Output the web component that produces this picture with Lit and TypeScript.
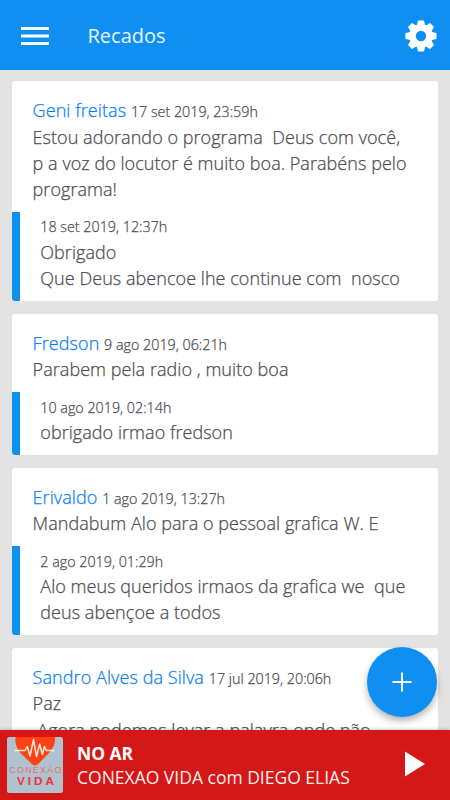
import { LitElement, html, svg, css, nothing } from "lit";
import { customElement, property } from "lit/decorators.js";

interface Reply {
  date: string;
  lines: string[];
}
interface Message {
  author: string;
  date: string;
  lines: string[];
  reply?: Reply;
}

const MESSAGES: Message[] = [
  {
    author: "Geni freitas",
    date: "17 set 2019, 23:59h",
    lines: ["Estou adorando o programa  Deus com você,", "p a voz do locutor é muito boa. Parabéns pelo", "programa!"],
    reply: { date: "18 set 2019, 12:37h", lines: ["Obrigado", "Que Deus abencoe lhe continue com  nosco"] },
  },
  {
    author: "Fredson",
    date: "9 ago 2019, 06:21h",
    lines: ["Parabem pela radio , muito boa"],
    reply: { date: "10 ago 2019, 02:14h", lines: ["obrigado irmao fredson"] },
  },
  {
    author: "Erivaldo",
    date: "1 ago 2019, 13:27h",
    lines: ["Mandabum Alo para o pessoal grafica W. E"],
    reply: { date: "2 ago 2019, 01:29h", lines: ["Alo meus queridos irmaos da grafica we  que", "deus abençoe a todos"] },
  },
  {
    author: "Sandro Alves da Silva",
    date: "17 jul 2019, 20:06h",
    lines: ["Paz", " Agora podemos levar a palavra onde não"],
  },
];

const TEETH = [0, 45, 90, 135, 180, 225, 270, 315];

@customElement("message-card")
export class MessageCard extends LitElement {
  @property({ attribute: false }) message!: Message;

  static styles = css`
    :host {
      display: block;
      background: #fff;
      border-radius: 3px;
      overflow: hidden;
      flex: none;
      color: #4c4d51;
      font-size: 18px;
      font-weight: 300;
      line-height: 26.2px;
      letter-spacing: 0.05px;
      -webkit-text-stroke-width: 0.25px;
    }
    .body {
      padding: 16.4px 0 10px 20.3px;
    }
    .line {
      height: 26.2px;
      white-space: pre;
    }
    .author {
      color: #0a80f5;
      letter-spacing: 0.08px;
    }
    .date {
      font-size: 14.3px;
      letter-spacing: 0;
    }
    .reply {
      border-left: 8px solid #108ff2;
      padding: 0.3px 0 9.7px 20px;
    }
  `;

  render() {
    const m = this.message;
    return html`
      <div class="body">
        <div class="line"><span class="author">${m.author}</span> <span class="date">${m.date}</span></div>
        ${m.lines.map((l) => html`<div class="line">${l}</div>`)}
      </div>
      ${m.reply
        ? html`<div class="reply">
            <div class="line"><span class="date">${m.reply.date}</span></div>
            ${m.reply.lines.map((l) => html`<div class="line">${l}</div>`)}
          </div>`
        : nothing}
    `;
  }
}

@customElement("app-root")
export class AppRoot extends LitElement {
  static styles = css`
    :host {
      display: flex;
      flex-direction: column;
      position: relative;
      height: 800px;
      overflow: hidden;
      background: #e3e3e3;
      font-family: "Open Sans", sans-serif;
    }
    .header {
      flex: none;
      height: 70px;
      box-sizing: border-box;
      background: #108ff2;
      display: flex;
      align-items: center;
      padding: 1px 12.7px 0 21px;
      color: #fff;
    }
    .menu {
      width: 28px;
      height: 18px;
      flex: none;
      margin-top: 1px;
    }
    .title {
      flex: 1;
      margin: 0 0 1px 38.5px;
      font-size: 20px;
      font-weight: 400;
      color: #e8f5ff;
    }
    .gear {
      width: 32px;
      height: 32px;
      flex: none;
    }
    .list {
      flex: 1;
      min-height: 0;
      overflow: hidden;
      display: flex;
      flex-direction: column;
      gap: 12.9px;
      padding: 11px 12.5px 0 12.3px;
    }
    .player {
      flex: none;
      height: 70px;
      box-sizing: border-box;
      background: #d41717;
      color: #fff;
      display: flex;
      align-items: center;
      padding: 0 25px 0 7px;
      box-shadow: 0 0 4px rgba(0, 0, 0, 0.3);
      position: relative;
    }
    .cover {
      width: 56px;
      height: 56px;
      flex: none;
    }
    .info {
      flex: 1;
      margin-left: 14px;
      line-height: 24px;
      font-size: 17.5px;
      white-space: nowrap;
    }
    .live {
      font-weight: 700;
      letter-spacing: -0.1px;
    }
    .show {
      color: #ffeded;
    }
    .play {
      width: 20px;
      height: 26px;
      flex: none;
      margin-bottom: 2px;
    }
    .add {
      position: absolute;
      right: 12.7px;
      bottom: 83px;
      width: 70px;
      height: 70px;
      padding: 0;
      border: 0;
      border-radius: 50%;
      background: #108ff2;
      box-shadow: 0 4px 7px rgba(0, 0, 0, 0.3);
      display: grid;
      place-items: center;
    }
    .plus {
      width: 20px;
      height: 20px;
    }
    .logo-top {
      font: 400 8.8px "Liberation Sans", sans-serif;
      fill: #e86f72;
    }
    .logo-bottom {
      font: 700 11.8px "Liberation Sans", sans-serif;
      fill: #ee3037;
    }
  `;

  render() {
    return html`
      <header class="header">
        <svg class="menu" viewBox="0 0 28 18" fill="#fff">
          <path d="M0 0h28v3H0zM0 7.5h28v3H0zM0 15h28v3H0z" />
        </svg>
        <h1 class="title">Recados</h1>
        <svg class="gear" viewBox="-16 -16 32 32">
          <g fill="#fff">
            <circle r="11.7" />
            ${TEETH.map(
              (a) => svg`<path transform="rotate(${a})" d="M-4.2-10l1.1-5.1q.1-.5.6-.5h5q.5 0 .6.5l1.1 5.1z" />`,
            )}
          </g>
          <circle r="5.2" fill="#108ff2" />
        </svg>
      </header>
      <main class="list">${MESSAGES.map((m) => html`<message-card .message=${m}></message-card>`)}</main>
      <button class="add" aria-label="Adicionar">
        <svg class="plus" viewBox="0 0 20 20" fill="#fff"><path d="M9 .5h2V9h8.5v2H11v8.500H9V11H.5V9H9z" /></svg>
      </button>
      <footer class="player">
        <svg class="cover" viewBox="0 0 56 56">
          <defs>
            <clipPath id="frame"><rect width="56" height="56" rx="2.5" /></clipPath>
          </defs>
          <g clip-path="url(#frame)">
            <rect width="56" height="56" fill="#afc2ce" />
            <path d="M8.5 0H48C48.6 6 46 12 41 17L31.5 26.8Q28 30 24.5 26.8L14.5 17C9.5 12 8 6 8.5 0z" fill="#ff4216" />
            <path
              d="M7.5 13.5H18l2.3-4 2.7 9.5L26.5 2.5l3 17 3.2-12.5 2.6 10.5 2.2-8 1.8 4h8.2"
              fill="none" stroke="#ffe9d8" stroke-width="1.5" stroke-linejoin="round" />
            <text class="logo-top" x="2.3" y="35.8" textLength="52" lengthAdjust="spacing">CONEXÃO</text>
            <text class="logo-bottom" x="10" y="47.8" textLength="37" lengthAdjust="spacing">VIDA</text>
          </g>
        </svg>
        <div class="info">
          <div class="live">NO AR</div>
          <div class="show">CONEXAO VIDA com DIEGO ELIAS</div>
        </div>
        <svg class="play" viewBox="0 0 20 26" fill="#fff"><path d="M0 .5v25L20 13z" /></svg>
      </footer>
    `;
  }
}
